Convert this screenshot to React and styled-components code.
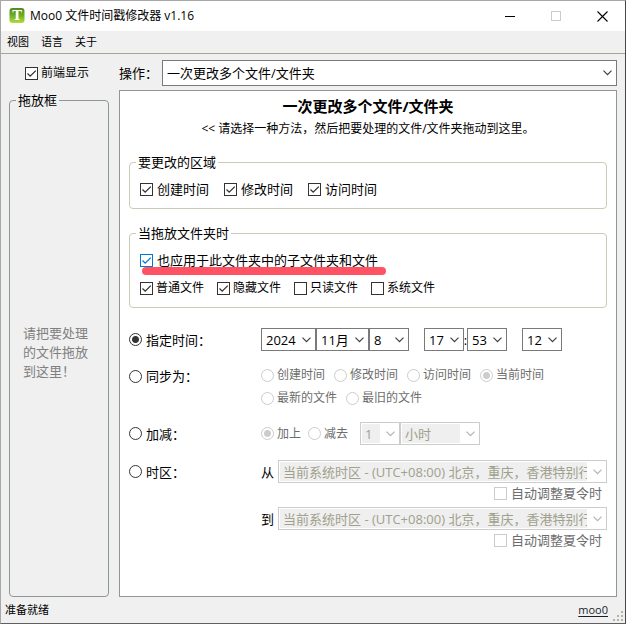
import React, { useState } from 'react';
import styled, { createGlobalStyle } from 'styled-components';

const GlobalStyle = createGlobalStyle`
  * {
    box-sizing: border-box;
  }

  body {
    margin: 0;
    background: #f0f0f0;
    color: #000;
    font-family: "Open Sans", "Noto Sans CJK SC", sans-serif;
    font-size: 13px;
    line-height: 18px;
  }

  button, select, input {
    font-family: inherit;
    margin: 0;
  }
`;

const Window = styled.div`
  display: flex;
  flex-direction: column;
  min-height: 100vh;
  border: 1px solid #a8a8a8;
  border-right-color: #484848;
  border-bottom-color: #606060;
  background: #f0f0f0;
`;

const TitleBar = styled.header`
  display: flex;
  align-items: center;
  height: 30px;
  padding-left: 8px;
  background: #fff;
`;

const AppTitle = styled.h1`
  flex: 1;
  margin: 0 0 0 5px;
  font-size: 12px;
  font-weight: 400;
`;

const CaptionButton = styled.button`
  display: flex;
  align-items: center;
  justify-content: center;
  width: 46px;
  height: 30px;
  padding: 0;
  border: none;
  background: transparent;
  color: ${({ disabled }) => (disabled ? '#ccc' : '#000')};
`;

const MenuBar = styled.nav`
  display: flex;
  gap: 12px;
  height: 23px;
  padding: 0 6px;
  border-bottom: 1px solid #a0a896;
`;

const MenuItem = styled.button`
  padding: 0;
  border: none;
  background: transparent;
  color: #000;
  font-size: 11px;
  line-height: 22px;
`;

const Toolbar = styled.div`
  display: grid;
  grid-template-columns: 100px 1fr;
  gap: 10px;
  align-items: center;
  padding: 6px 8px 4px;
`;

const ToolbarCheck = styled.div`
  display: flex;
  padding-left: 16px;
`;

const Operation = styled.div`
  display: flex;
  align-items: center;
  gap: 4px;
`;

const Body = styled.main`
  flex: 1;
  display: grid;
  grid-template-columns: 100px 1fr;
  gap: 10px;
  padding: 0 8px;
`;

const Group = styled.fieldset`
  min-width: 0;
  margin: 0;
  padding: 0 6px;
  border: 1px solid ${({ $dark }) => ($dark ? '#8e9997' : '#cbcbba')};
  border-radius: 4px;
`;

const Legend = styled.legend`
  padding: 0 2px;
  line-height: 20px;
`;

const DropArea = styled.div`
  display: flex;
  align-items: center;
  height: 100%;
  padding: 0 7px 2px;
  color: #808080;
  line-height: 19px;
`;

const Panel = styled.section`
  display: flex;
  flex-direction: column;
  gap: 14px;
  padding: 4px 9px;
  border: 1px solid #8e9997;
  background: #fff;
`;

const PanelHead = styled.div`
  text-align: center;
`;

const PanelTitle = styled.h2`
  margin: 0 0 3px;
  font-size: 15px;
  line-height: 22px;
`;

const PanelHint = styled.p`
  margin: 0;
  font-size: 12px;
`;

const GroupBody = styled.div`
  display: flex;
  flex-direction: column;
  align-items: flex-start;
  gap: 10px;
  padding: 8px 4px 10px;
`;

const Row = styled.div`
  display: flex;
  align-items: center;
  gap: ${({ $gap }) => $gap || 0}px;
`;

const Stack = styled.div`
  display: flex;
  flex-direction: column;
  gap: 5px;
`;

const CheckLabel = styled.label`
  position: relative;
  display: inline-flex;
  align-items: center;
  gap: ${({ $small }) => ($small ? 3 : 4)}px;
  white-space: nowrap;
  font-size: ${({ $small }) => ($small ? 12 : 13)}px;
  color: ${({ $off }) => ($off ? '#6d6d6d' : '#000')};
`;

// red marker stroke drawn under the option
const MarkedLabel = styled(CheckLabel)`
  &::after {
    content: '';
    position: absolute;
    left: 2px;
    right: -8px;
    top: 16px;
    height: 8px;
    border-radius: 4px;
    background: #ff5364;
  }
`;

const tick = (color) =>
  `url("data:image/svg+xml,%3Csvg xmlns='http://www.w3.org/2000/svg' width='11' height='11'%3E%3Cpath d='M1.5 5.5L4.2 8.2L9.8 2.6' fill='none' stroke='%23${color}' stroke-width='1.3'/%3E%3C/svg%3E")`;

const CheckInput = styled.input.attrs({ type: 'checkbox' })`
  appearance: none;
  flex: none;
  width: 13px;
  height: 13px;
  border: 1px solid ${({ $blue }) => ($blue ? '#0078d7' : '#333')};
  background: #fff;

  &:checked {
    background-image: ${({ $blue }) => tick($blue ? '0078d7' : '333333')};
  }

  &:disabled {
    border-color: #ccc;
  }
`;

const RadioInput = styled.input.attrs({ type: 'radio' })`
  appearance: none;
  flex: none;
  width: 13px;
  height: 13px;
  border: 1px solid #333;
  border-radius: 50%;
  background: #fff;

  &:checked {
    background: radial-gradient(circle, #333 3px, #fff 4px);
  }

  &:disabled {
    border-color: #ccc;
  }

  &:disabled:checked {
    background: radial-gradient(circle, #ccc 3px, #fff 4px);
  }
`;

const SelectBox = styled.div`
  display: grid;
  align-items: center;
  flex: ${({ $width }) => ($width ? 'none' : 1)};
  width: ${({ $width }) => ($width ? `${$width}px` : 'auto')};
  min-width: 0;
  color: #404040;

  & > * {
    grid-area: 1 / 1;
  }

  & > svg {
    justify-self: end;
    margin-right: 5px;
    pointer-events: none;
  }
`;

const SelectInput = styled.select`
  appearance: none;
  width: 100%;
  min-width: 0;
  height: ${({ $tall }) => ($tall ? 26 : 23)}px;
  padding: 0 19px 0 4px;
  border: 1px solid #7a7a7a;
  border-radius: 0;
  background: #fff;
  color: #000;
  font-size: 13px;

  &:disabled {
    padding: 1px 19px 1px 1px;
    border-color: #ccc;
    background: #efefef content-box;
    color: #a0a08c;
    opacity: 1;
    text-indent: 3px;
  }

  &:disabled + svg {
    color: #b4b4b4;
  }
`;

const Modes = styled.div`
  display: grid;
  grid-template-columns: 132px 1fr;
  row-gap: 15px;
  align-items: start;
  margin-top: 6px;
`;

const ModeCell = styled.div`
  display: flex;
  align-items: center;
  height: ${({ $short }) => ($short ? 20 : 23)}px;
`;

const Spacer = styled.span`
  width: ${({ $width }) => $width}px;
`;

const Colon = styled.span`
  display: flex;
  justify-content: center;
  width: 3px;
`;

const ZoneCheck = styled.div`
  display: flex;
  justify-content: flex-end;
  margin-top: 1px;
  padding-right: 5px;
`;

const StatusBar = styled.footer`
  display: flex;
  align-items: center;
  height: 26px;
  padding: 0 2px 0 4px;
  font-size: 11px;
`;

const StatusText = styled.span`
  flex: 1;
`;

const StatusLink = styled.a`
  margin-right: 5px;
  color: #1c1c2c;
  text-underline-offset: 2px;
`;

const Grip = styled.svg`
  align-self: flex-end;
  margin-bottom: 2px;
`;

const AppIcon = () => (
  <svg width="16" height="16" viewBox="0 0 16 16" aria-hidden="true">
    <defs>
      <linearGradient id="leaf" x1="0" y1="0" x2="0" y2="1">
        <stop offset="0" stopColor="#4f8a1c" />
        <stop offset="0.5" stopColor="#6fae22" />
        <stop offset="1" stopColor="#b4dc3c" />
      </linearGradient>
    </defs>
    <rect x="0.5" y="0" width="15" height="15" rx="3" fill="url(#leaf)" />
    <text x="8" y="12" textAnchor="middle" fontFamily="DejaVu Serif" fontWeight="bold" fontSize="13" fill="#fff">
      T
    </text>
  </svg>
);

const Chevron = () => (
  <svg width="9" height="6" viewBox="0 0 9 6" fill="none" stroke="currentColor" strokeWidth="1.2">
    <path d="M0.5 0.7L4.5 4.7L8.5 0.7" />
  </svg>
);

const Check = ({ children, small, disabled, blue, marked, ...rest }) => {
  const Label = marked ? MarkedLabel : CheckLabel;
  return (
    <Label $small={small} $off={disabled}>
      <CheckInput disabled={disabled} $blue={blue} {...rest} />
      {children}
    </Label>
  );
};

const Radio = ({ children, small, disabled, ...rest }) => (
  <CheckLabel $small={small} $off={disabled}>
    <RadioInput disabled={disabled} {...rest} />
    {children}
  </CheckLabel>
);

const Select = ({ options, width, tall, ...rest }) => (
  <SelectBox $width={width}>
    <SelectInput $tall={tall} {...rest}>
      {options.map((option) => (
        <option key={option}>{option}</option>
      ))}
    </SelectInput>
    <Chevron />
  </SelectBox>
);

const range = (from, to, suffix = '') =>
  Array.from({ length: to - from + 1 }, (_, i) => `${from + i}${suffix}`);

const ZONES = ['当前系统时区 - (UTC+08:00) 北京，重庆，香港特别行政区，乌鲁木齐'];

const App = () => {
  const [mode, setMode] = useState('fixed');

  const modeRadio = (value, text, short) => (
    <ModeCell $short={short}>
      <Radio name="mode" checked={mode === value} onChange={() => setMode(value)}>
        {text}
      </Radio>
    </ModeCell>
  );

  const fixedOff = mode !== 'fixed';
  const syncOff = mode !== 'sync';
  const shiftOff = mode !== 'shift';
  const zoneOff = mode !== 'zone';

  return (
    <Window lang="zh-CN">
      <GlobalStyle />
      <TitleBar>
        <AppIcon />
        <AppTitle>Moo0 文件时间戳修改器 v1.16</AppTitle>
        <CaptionButton aria-label="最小化">
          <svg width="11" height="11" stroke="currentColor" shapeRendering="crispEdges">
            <path d="M0 5.5H10" />
          </svg>
        </CaptionButton>
        <CaptionButton aria-label="最大化" disabled>
          <svg width="11" height="11" fill="none" stroke="currentColor" shapeRendering="crispEdges">
            <rect x="0.5" y="0.5" width="9" height="9" />
          </svg>
        </CaptionButton>
        <CaptionButton aria-label="关闭">
          <svg width="11" height="11" stroke="currentColor" strokeWidth="1.1">
            <path d="M0.5 0.5L10.5 10.5M10.5 0.5L0.5 10.5" />
          </svg>
        </CaptionButton>
      </TitleBar>

      <MenuBar>
        <MenuItem>视图</MenuItem>
        <MenuItem>语言</MenuItem>
        <MenuItem>关于</MenuItem>
      </MenuBar>

      <Toolbar>
        <ToolbarCheck>
          <Check small defaultChecked>前端显示</Check>
        </ToolbarCheck>
        <Operation>
          <label htmlFor="operation">操作：</label>
          <Select id="operation" tall options={['一次更改多个文件/文件夹']} />
        </Operation>
      </Toolbar>

      <Body>
        <Group $dark>
          <Legend>拖放框</Legend>
          <DropArea>请把要处理的文件拖放到这里！</DropArea>
        </Group>

        <Panel>
          <PanelHead>
            <PanelTitle>一次更改多个文件/文件夹</PanelTitle>
            <PanelHint>&lt;&lt; 请选择一种方法，然后把要处理的文件/文件夹拖动到这里。</PanelHint>
          </PanelHead>

          <Group>
            <Legend>要更改的区域</Legend>
            <GroupBody>
              <Row $gap={15}>
                <Check defaultChecked>创建时间</Check>
                <Check defaultChecked>修改时间</Check>
                <Check defaultChecked>访问时间</Check>
              </Row>
            </GroupBody>
          </Group>

          <Group>
            <Legend>当拖放文件夹时</Legend>
            <GroupBody>
              <Check blue marked defaultChecked>也应用于此文件夹中的子文件夹和文件</Check>
              <Row $gap={13}>
                <Check small defaultChecked>普通文件</Check>
                <Check small defaultChecked>隐藏文件</Check>
                <Check small>只读文件</Check>
                <Check small>系统文件</Check>
              </Row>
            </GroupBody>
          </Group>

          <Modes>
            {modeRadio('fixed', '指定时间：')}
            <Row>
              <Select aria-label="年" width={55} disabled={fixedOff} options={range(1980, 2099)} defaultValue="2024" />
              <Select aria-label="月" width={53} disabled={fixedOff} options={range(1, 12, '月')} defaultValue="11月" />
              <Select aria-label="日" width={40} disabled={fixedOff} options={range(1, 31)} defaultValue="8" />
              <Spacer $width={15} />
              <Select aria-label="时" width={40} disabled={fixedOff} options={range(0, 23)} defaultValue="17" />
              <Colon>:</Colon>
              <Select aria-label="分" width={40} disabled={fixedOff} options={range(0, 59)} defaultValue="53" />
              <Spacer $width={15} />
              <Select aria-label="秒" width={40} disabled={fixedOff} options={range(0, 59)} defaultValue="12" />
            </Row>

            {modeRadio('sync', '同步为：', true)}
            <Stack>
              <Row $gap={9}>
                <Radio small name="source" disabled={syncOff}>创建时间</Radio>
                <Radio small name="source" disabled={syncOff}>修改时间</Radio>
                <Radio small name="source" disabled={syncOff}>访问时间</Radio>
                <Radio small name="source" disabled={syncOff} defaultChecked>当前时间</Radio>
              </Row>
              <Row $gap={9}>
                <Radio small name="source" disabled={syncOff}>最新的文件</Radio>
                <Radio small name="source" disabled={syncOff}>最旧的文件</Radio>
              </Row>
            </Stack>

            {modeRadio('shift', '加减：')}
            <Row>
              <Row $gap={7}>
                <Radio small name="sign" disabled={shiftOff} defaultChecked>加上</Radio>
                <Radio small name="sign" disabled={shiftOff}>减去</Radio>
              </Row>
              <Spacer $width={12} />
              <Select aria-label="数量" width={40} disabled={shiftOff} options={range(1, 60)} />
              <Select aria-label="单位" width={80} disabled={shiftOff} options={['小时', '分钟', '秒']} />
            </Row>

            {modeRadio('zone', '时区：')}
            <Stack>
              <div>
                <Row $gap={4}>
                  <label htmlFor="zoneFrom">从</label>
                  <Select id="zoneFrom" disabled={zoneOff} options={ZONES} />
                </Row>
                <ZoneCheck>
                  <Check disabled={zoneOff}>自动调整夏令时</Check>
                </ZoneCheck>
              </div>
              <div>
                <Row $gap={4}>
                  <label htmlFor="zoneTo">到</label>
                  <Select id="zoneTo" disabled={zoneOff} options={ZONES} />
                </Row>
                <ZoneCheck>
                  <Check disabled={zoneOff}>自动调整夏令时</Check>
                </ZoneCheck>
              </div>
            </Stack>
          </Modes>
        </Panel>
      </Body>

      <StatusBar>
        <StatusText>准备就绪</StatusText>
        <StatusLink href="#moo0">moo0</StatusLink>
        <Grip width="10" height="10" fill="#b4b4a0">
          <path d="M8 0h2v2H8zM4 4h2v2H4zM8 4h2v2H8zM0 8h2v2H0zM4 8h2v2H4zM8 8h2v2H8z" />
        </Grip>
      </StatusBar>
    </Window>
  );
};

export default App;
